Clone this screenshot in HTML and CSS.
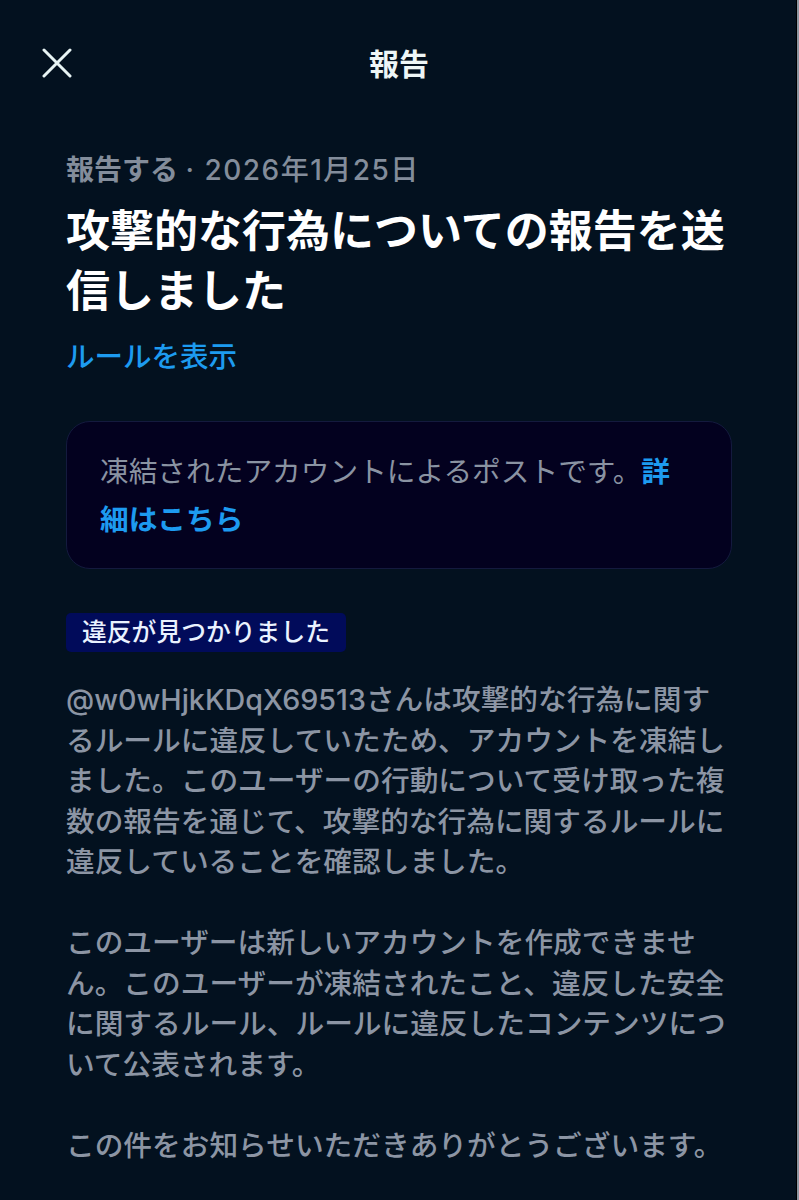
FILE: index.html
```html
<!DOCTYPE html>
<html lang="ja">
<head>
<meta charset="utf-8">
<title>報告</title>
<link rel="stylesheet" href="styles.css">
</head>
<body>
<div class="screen">
  <header class="topbar">
    <button class="close" aria-label="閉じる">
      <svg width="30" height="30" viewBox="0 0 30 30" fill="none" stroke="#e8f4f4" stroke-width="3" stroke-linecap="round">
        <path d="M2 2 L28 28 M28 2 L2 28"/>
      </svg>
    </button>
    <h1 class="topbar-title">報告</h1>
    <span></span>
  </header>
  <main class="content">
    <p class="meta"><span class="meta-strong">報告する</span> <span class="meta-date">· 2026年1月25日</span></p>
    <h2 class="headline">攻撃的な行為についての報告を送信しました</h2>
    <a class="rules-link" href="#">ルールを表示</a>
    <div class="notice">
      <p class="notice-text">凍結されたアカウントによるポストです。<a class="notice-link" href="#">詳細はこちら</a></p>
    </div>
    <span class="badge">違反が見つかりました</span>
    <div class="body">
      <p>@w0wHjkKDqX69513さんは攻撃的な行為に関するルールに違反していたため、アカウントを凍結しました。このユーザーの行動について受け取った複数の報告を通じて、攻撃的な行為に関するルールに違反していることを確認しました。</p>
      <p>このユーザーは新しいアカウントを作成できません。このユーザーが凍結されたこと、違反した安全に関するルール、ルールに違反したコンテンツについて公表されます。</p>
      <p>この件をお知らせいただきありがとうございます。</p>
    </div>
  </main>
</div>
</body>
</html>
```
FILE: styles.css
```css
html {
  background: #8e98a3;
}
body {
  margin: 0;
  font-family: Inter, "Noto Sans CJK JP", sans-serif;
}
.screen {
  width: 796px;
  height: 1200px;
  background: #03111f;
  border-right: 1px solid #000000;
  overflow: hidden;
}
.topbar {
  height: 128px;
  display: grid;
  grid-template-columns: 1fr auto 1fr;
  align-items: center;
  padding: 0 42px;
}
.close {
  background: none;
  border: 0;
  padding: 0;
  width: 30px;
  height: 30px;
  display: flex;
  justify-self: start;
  margin-top: -2px;
}
.topbar-title {
  margin: 0;
  font-size: 30px;
  line-height: 40px;
  font-weight: 700;
  color: #eef6f6;
  transform: translateX(1px);
}
.content {
  padding: 22px 64px 0 66px;
  display: flex;
  flex-direction: column;
  align-items: flex-start;
}
.meta {
  margin: 0;
  font-size: 28px;
  line-height: 40px;
  color: #838d9b;
  font-weight: 500;
}
.meta-strong {
  font-weight: 700;
}
.meta-date {
  letter-spacing: 1.5px;
}
.headline {
  margin: 11px 0 0 0;
  font-size: 44px;
  line-height: 60px;
  font-weight: 700;
  color: #ffffff;
}
.rules-link {
  margin-top: 16px;
  font-size: 28.5px;
  line-height: 40px;
  font-weight: 500;
  color: #1d9bf0;
  text-decoration: none;
}
.notice {
  margin-top: 44px;
  align-self: stretch;
  background: #03011f;
  border: 1px solid #141a3e;
  border-radius: 24px;
  padding: 26px 33px 24px 33px;
}
.notice-text {
  margin: 0;
  font-size: 28.7px;
  line-height: 48px;
  color: #8a93a2;
}
.notice-link {
  color: #1d9bf0;
  font-weight: 700;
  text-decoration: none;
}
.badge {
  margin-top: 44px;
  background: #010b5a;
  border-radius: 5px;
  padding: 0 16px;
  font-size: 24.8px;
  line-height: 39px;
  font-weight: 500;
  color: #eaf2ff;
}
.body {
  margin-top: 28px;
  display: flex;
  flex-direction: column;
  gap: 40.5px;
}
.body p {
  margin: 0;
  font-size: 28.7px;
  line-height: 40.5px;
  font-weight: 500;
  color: #8c95a4;
}
```
